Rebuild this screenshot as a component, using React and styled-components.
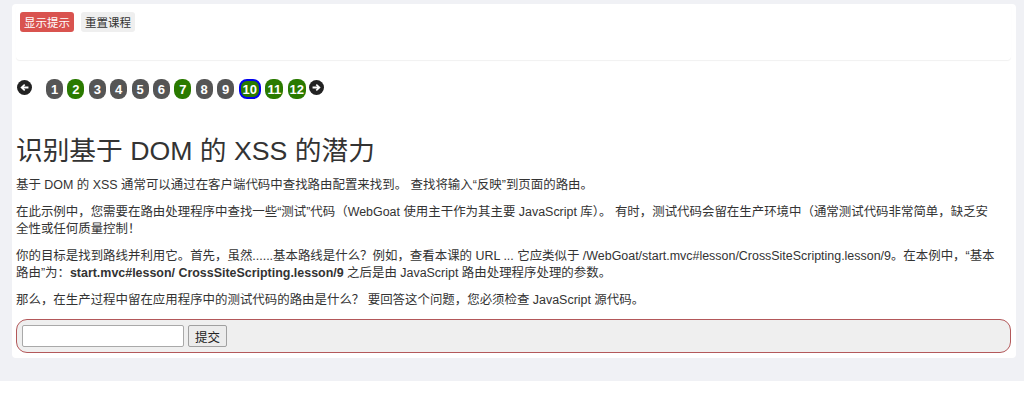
import React from "react"
import styled, { createGlobalStyle } from "styled-components"

const GlobalStyle = createGlobalStyle`
  body {
    margin: 0;
    background: #ffffff;
    font-family: "Liberation Sans", "Noto Sans CJK SC", sans-serif;
    color: #333333;
  }
`

const Page = styled.div`
  background: #f0f1f5;
  padding: 4px 8px 23px 12px;
`

const Panel = styled.div`
  background: #ffffff;
  border-radius: 4px;
  padding: 0 5px 5px 4px;
`

const HeaderCard = styled.div`
  height: 56px;
  box-sizing: border-box;
  padding: 8px 4px;
  border-radius: 4px;
  box-shadow: 0 1px 1px rgba(0, 0, 0, 0.06);
  display: flex;
  align-items: flex-start;
  gap: 7px;
`

const SmallButton = styled.button`
  font-family: inherit;
  font-size: 11.5px;
  height: 20px;
  padding: 0 4px;
  border: none;
  border-radius: 3px;
  color: ${(p) => (p.$danger ? "#ffffff" : "#333333")};
  background: ${(p) => (p.$danger ? "#d9534f" : "#efefef")};
`

const Pager = styled.div`
  display: flex;
  align-items: center;
  margin: 19px 0 0 1px;
  height: 20px;
`

const Arrow = styled.svg`
  width: 15px;
  height: 15px;
  margin-top: -3px;
  margin-right: ${(p) => p.$gap || 0}px;
  margin-left: ${(p) => p.$left || 0}px;
`

const PageNum = styled.span`
  box-sizing: border-box;
  min-width: 17px;
  height: 20px;
  padding: 0 2px;
  margin-right: 4.4px;
  border-radius: 8px;
  display: inline-flex;
  align-items: center;
  justify-content: center;
  font-size: 13px;
  font-weight: bold;
  color: #ffffff;
  background: ${(p) => (p.$done ? "#2a7a00" : "#555555")};
  border: ${(p) => (p.$current ? "2px solid #0000ee" : "none")};
`

const Title = styled.h2`
  font-size: 26.7px;
  font-weight: normal;
  line-height: 32px;
  margin: 36px 0 10px 0;
`

const Para = styled.p`
  font-size: 12.45px;
  line-height: 17px;
  margin: 0 0 10px 0;
  padding-right: 12px;
`

const AttackForm = styled.form`
  box-sizing: border-box;
  width: 100%;
  height: 34px;
  margin: 10px 0 0 0;
  border: 1px solid #b3585a;
  border-radius: 11px;
  background: #efefef;
  display: flex;
  align-items: center;
  padding: 0 5px;
  gap: 4px;
`

const TextInput = styled.input`
  box-sizing: border-box;
  width: 162px;
  height: 22px;
  border: 1px solid #a9a9a9;
  border-radius: 2px;
  background: #ffffff;
`

const SubmitButton = styled.button`
  box-sizing: border-box;
  height: 22px;
  width: 39px;
  font-family: inherit;
  font-size: 12.5px;
  color: #222222;
  border: 1px solid #a0a0a0;
  border-radius: 2px;
  background: #ececec;
  padding: 0;
`

const ArrowIcon = ({ dir, gap, left }) => (
  <Arrow viewBox="0 0 16 16" $gap={gap} $left={left}>
    <circle cx="8" cy="8" r="8" fill="#222222" />
    <g transform={dir === "right" ? "rotate(180 8 8)" : undefined}>
      <path
        d="M3.6 8 L7.6 4.2 L8.9 5.5 L7.2 7.05 H12.2 V8.95 H7.2 L8.9 10.5 L7.6 11.8 Z"
        fill="#ffffff"
      />
    </g>
  </Arrow>
)

const pages = [
  { n: 1 },
  { n: 2, done: true },
  { n: 3 },
  { n: 4 },
  { n: 5 },
  { n: 6 },
  { n: 7, done: true },
  { n: 8 },
  { n: 9 },
  { n: 10, done: true, current: true },
  { n: 11, done: true },
  { n: 12, done: true },
]

const App = () => {
  return (
    <>
      <GlobalStyle />
      <Page>
        <Panel>
          <HeaderCard>
            <SmallButton $danger>显示提示</SmallButton>
            <SmallButton>重置课程</SmallButton>
          </HeaderCard>
          <Pager>
            <ArrowIcon dir="left" gap={14} />
            {pages.map((p) => (
              <PageNum key={p.n} $done={p.done} $current={p.current}>
                {p.n}
              </PageNum>
            ))}
            <ArrowIcon dir="right" left={-1.5} />
          </Pager>
          <Title>识别基于 DOM 的 XSS 的潜力</Title>
          <Para>
            基于 DOM 的 XSS 通常可以通过在客户端代码中查找路由配置来找到。 查找将输入“反映”到页面的路由。
          </Para>
          <Para>
            在此示例中，您需要在路由处理程序中查找一些“测试”代码（WebGoat 使用主干作为其主要 JavaScript 库）。 有时，测试代码会留在生产环境中（通常测试代码非常简单，缺乏安全性或任何质量控制！
          </Para>
          <Para>
            你的目标是找到路线并利用它。首先，虽然......基本路线是什么？例如，查看本课的 URL ... 它应类似于 /WebGoat/start.mvc#lesson/CrossSiteScripting.lesson/9。在本例中，“基本路由”为：<b>start.mvc#lesson/ CrossSiteScripting.lesson/9</b> 之后是由 JavaScript 路由处理程序处理的参数。
          </Para>
          <Para>
            那么，在生产过程中留在应用程序中的测试代码的路由是什么？ 要回答这个问题，您必须检查 JavaScript 源代码。
          </Para>
          <AttackForm onSubmit={(e) => e.preventDefault()}>
            <TextInput type="text" />
            <SubmitButton type="submit">提交</SubmitButton>
          </AttackForm>
        </Panel>
      </Page>
    </>
  )
}

export default App
